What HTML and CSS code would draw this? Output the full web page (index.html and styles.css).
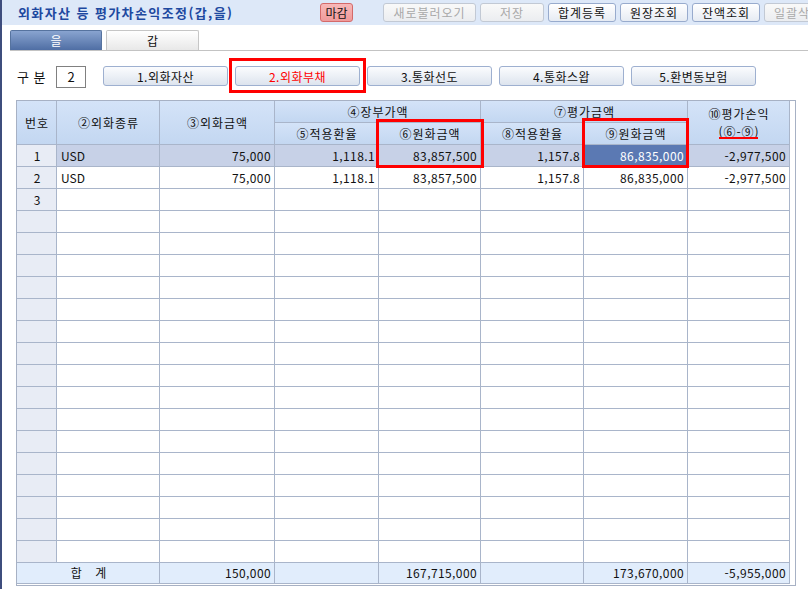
FILE: index.html
```html
<!DOCTYPE html>
<html lang="ko">
<head>
<meta charset="utf-8">
<title>외화자산 등 평가차손익조정(갑,을)</title>
<link rel="stylesheet" href="styles.css">
</head>
<body>
<div class="app">
  <header class="titlebar">
    <h1 class="title">외화자산 등 평가차손익조정(갑,을)</h1>
    <div class="toolbar">
      <button class="btn btn-close">마감</button>
      <button class="btn btn-off w-lg">새로불러오기</button>
      <button class="btn btn-off w-sm">저장</button>
      <button class="btn w-md">합계등록</button>
      <button class="btn w-md">원장조회</button>
      <button class="btn w-md">잔액조회</button>
      <button class="btn btn-off w-md">일괄삭제</button>
    </div>
  </header>

  <nav class="tabs">
    <div class="tab active">을</div>
    <div class="tab">갑</div>
  </nav>

  <div class="filter">
    <span class="filter-label">구 분</span>
    <span class="filter-input">2</span>
    <div class="seg">
      <button class="seg-btn">1.외화자산</button>
      <button class="seg-btn on">2.외화부채</button>
      <button class="seg-btn">3.통화선도</button>
      <button class="seg-btn">4.통화스왑</button>
      <button class="seg-btn">5.환변동보험</button>
    </div>
  </div>

  <div class="grid-wrap">
    <table class="grid">
      <colgroup>
        <col class="c-no">
        <col class="c-kind">
        <col class="c-amt">
        <col class="c-a">
        <col class="c-b">
        <col class="c-c">
        <col class="c-d">
        <col class="c-b">
      </colgroup>
      <thead>
        <tr>
          <th rowspan="2">번호</th>
          <th rowspan="2">②외화종류</th>
          <th rowspan="2">③외화금액</th>
          <th colspan="2">④장부가액</th>
          <th colspan="2">⑦평가금액</th>
          <th rowspan="2" class="two">⑩평가손익<br>(⑥-⑨)</th>
        </tr>
        <tr>
          <th>⑤적용환율</th>
          <th>⑥원화금액</th>
          <th>⑧적용환율</th>
          <th>⑨원화금액</th>
        </tr>
      </thead>
      <tbody>
        <tr class="sel">
          <td class="no">1</td><td class="txt">USD</td><td class="num">75,000</td><td class="num">1,118.1</td><td class="num">83,857,500</td><td class="num">1,157.8</td><td class="num hl">86,835,000</td><td class="num">-2,977,500</td>
        </tr>
        <tr>
          <td class="no">2</td><td class="txt">USD</td><td class="num">75,000</td><td class="num">1,118.1</td><td class="num">83,857,500</td><td class="num">1,157.8</td><td class="num">86,835,000</td><td class="num">-2,977,500</td>
        </tr>
        <tr><td class="no">3</td><td></td><td></td><td></td><td></td><td></td><td></td><td></td></tr>
        <tr><td class="no"></td><td></td><td></td><td></td><td></td><td></td><td></td><td></td></tr>
        <tr><td class="no"></td><td></td><td></td><td></td><td></td><td></td><td></td><td></td></tr>
        <tr><td class="no"></td><td></td><td></td><td></td><td></td><td></td><td></td><td></td></tr>
        <tr><td class="no"></td><td></td><td></td><td></td><td></td><td></td><td></td><td></td></tr>
        <tr><td class="no"></td><td></td><td></td><td></td><td></td><td></td><td></td><td></td></tr>
        <tr><td class="no"></td><td></td><td></td><td></td><td></td><td></td><td></td><td></td></tr>
        <tr><td class="no"></td><td></td><td></td><td></td><td></td><td></td><td></td><td></td></tr>
        <tr><td class="no"></td><td></td><td></td><td></td><td></td><td></td><td></td><td></td></tr>
        <tr><td class="no"></td><td></td><td></td><td></td><td></td><td></td><td></td><td></td></tr>
        <tr><td class="no"></td><td></td><td></td><td></td><td></td><td></td><td></td><td></td></tr>
        <tr><td class="no"></td><td></td><td></td><td></td><td></td><td></td><td></td><td></td></tr>
        <tr><td class="no"></td><td></td><td></td><td></td><td></td><td></td><td></td><td></td></tr>
        <tr><td class="no"></td><td></td><td></td><td></td><td></td><td></td><td></td><td></td></tr>
        <tr><td class="no"></td><td></td><td></td><td></td><td></td><td></td><td></td><td></td></tr>
        <tr><td class="no"></td><td></td><td></td><td></td><td></td><td></td><td></td><td></td></tr>
        <tr><td class="no"></td><td></td><td></td><td></td><td></td><td></td><td></td><td></td></tr>
      </tbody>
      <tfoot>
        <tr>
          <td colspan="2" class="sum-label">합&nbsp;&nbsp;&nbsp;&nbsp;계</td>
          <td class="num">150,000</td>
          <td></td>
          <td class="num">167,715,000</td>
          <td></td>
          <td class="num">173,670,000</td>
          <td class="num">-5,955,000</td>
        </tr>
      </tfoot>
    </table>
  </div>

  <div class="mark mark-btn"></div>
  <div class="mark mark-book"></div>
  <div class="mark mark-eval"></div>
  <div class="mark-line"></div>
</div>
</body>
</html>
```

FILE: styles.css
```css
* { box-sizing: border-box; }
html, body { margin: 0; padding: 0; background: #fff; }
body {
  width: 808px;
  height: 589px;
  overflow: hidden;
  font-family: "Noto Sans CJK KR", "Noto Sans", sans-serif;
  font-size: 12px;
  color: #111;
}
.app {
  position: relative;
  height: 589px;
  border-left: 2px solid #3e4d7d;
}

/* title bar */
.titlebar {
  display: flex;
  align-items: center;
  height: 25px;
  padding-left: 16px;
  background: #dde8f8;
  overflow: hidden;
  white-space: nowrap;
}
.title {
  flex: 0 0 302px;
  margin: 0;
  font-size: 13px;
  font-weight: bold;
  color: #1d48a0;
  letter-spacing: 1.4px;
}
.toolbar { display: flex; gap: 4px; flex-shrink: 0; }
.btn {
  flex-shrink: 0;
  height: 19px;
  padding: 0;
  font: inherit;
  font-size: 12px;
  line-height: 17px;
  letter-spacing: 1px;
  color: #111;
  background: linear-gradient(#ffffff, #e6ebf3);
  border: 1px solid #98abcd;
  border-radius: 3px;
}
.btn-close {
  width: 33px;
  margin-right: 26px;
  letter-spacing: 0;
  background: linear-gradient(#f8b8b8, #ef9a9a);
  border-color: #d46a6a;
}
.btn-off { color: #a9a9a9; border-color: #c2c9d4; background: linear-gradient(#f9f9f9, #ebedf0); }
.w-sm { width: 64px; }
.w-md { width: 68px; }
.w-lg { width: 93px; }

/* tabs */
.tabs {
  display: flex;
  gap: 4px;
  margin: 5px 0 0 8px;
  border-bottom: 1px solid #c3c3c3;
}
.tab {
  width: 93px;
  height: 20px;
  line-height: 19px;
  text-align: center;
  border: 1px solid #c6c6c6;
  border-bottom: none;
  border-radius: 2px 2px 0 0;
  background: linear-gradient(#ffffff, #e8e8e8);
}
.tab.active {
  width: 92px;
  color: #fff;
  background: linear-gradient(#89a4d0, #4f6ea4);
  border-color: #56739f;
}

/* filter row */
.filter {
  display: flex;
  align-items: flex-start;
  margin-top: 15px;
  padding-left: 15px;
}
.filter-label {
  width: 39px;
  height: 22px;
  line-height: 22px;
  font-size: 13px;
  word-spacing: 1px;
}
.filter-input {
  width: 30px;
  height: 22px;
  line-height: 20px;
  text-align: center;
  font-size: 13px;
  border: 1px solid #808080;
}
.seg { display: flex; gap: 7px; margin-left: 17px; }
.seg-btn {
  width: 125px;
  height: 20px;
  padding: 0;
  font: inherit;
  letter-spacing: 0.5px;
  color: #111;
  background: linear-gradient(#fbfcfe, #dde4ee);
  border: 1px solid #9eb0d0;
  border-radius: 3px;
}
.seg-btn.on { color: #ff0000; }

/* grid */
.grid-wrap {
  width: 780px;
  height: 486px;
  margin: 12px 0 0 14px;
  border: 1px solid #a7b1c4;
}
.grid {
  width: 773px;
  table-layout: fixed;
  border-collapse: separate;
  border-spacing: 0;
}
.c-no { width: 40px; }
.c-kind { width: 103px; }
.c-amt { width: 115px; }
.c-a { width: 104px; }
.c-b { width: 102px; }
.c-c { width: 103px; }
.c-d { width: 104px; }
.grid tr { height: 22px; }
.grid tfoot tr { height: 21px; }
.grid th,
.grid td {
  padding: 0 3px 0 4px;
  border-right: 1px solid #a9b5ca;
  border-bottom: 1px solid #a9b5ca;
  white-space: nowrap;
  overflow: hidden;
  font-weight: normal;
  line-height: 16px;
}
.grid thead th {
  background: linear-gradient(#d4e3f8, #c3d7f1);
  text-align: center;
  letter-spacing: 1px;
  color: #111;
}
.grid thead th.two { line-height: 18px; }
.grid td.no { background: #e8ecf5; text-align: center; }
.grid td.txt { text-align: left; }
.grid td.num { text-align: right; letter-spacing: 0.4px; }
.grid tr.sel td { background: #c7d1e7; }
.grid tr.sel td.no { background: #e8ecf5; }
.grid tr.sel td.hl { background: #5b79b3; color: #fff; }
.grid tfoot td { background: #e1edfc; }
.grid td.sum-label { text-align: center; }

/* annotation overlays */
.mark {
  position: absolute;
  border: 3px solid #ff0000;
}
.mark-btn { left: 227px; top: 58px; width: 137px; height: 35px; }
.mark-book { left: 374px; top: 119px; width: 108px; height: 49px; }
.mark-eval { left: 580px; top: 118px; width: 107px; height: 50px; }
.mark-line {
  position: absolute;
  left: 717px;
  top: 137px;
  width: 39px;
  height: 2px;
  background: #ff0000;
}
```
